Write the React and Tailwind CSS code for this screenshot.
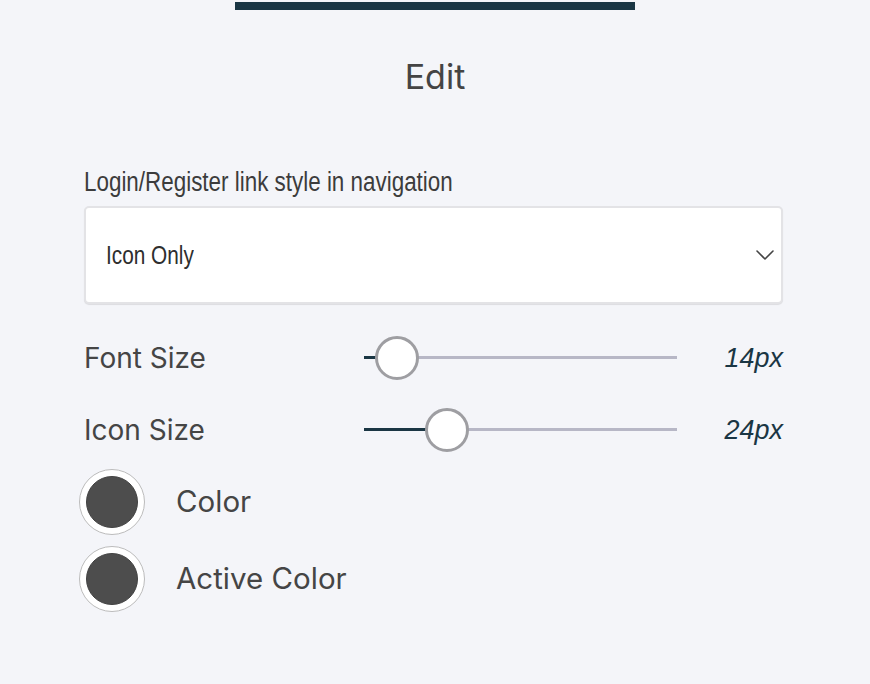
function SizeSlider({ label, value, thumb, fill }) {
  return (
    <div className="flex items-center h-[44px]">
      <span className="w-[280px] text-[28px] text-[#454545] font-['Inter',sans-serif] leading-none">{label}</span>
      <div className="relative w-[313px] h-[44px]">
        <div className="absolute left-0 right-0 top-[20px] h-[3px] bg-[#b7b7c6]" />
        <div className="absolute left-0 top-[20px] h-[3px] bg-[#1a3644]" style={{ width: fill }} />
        <div
          className="absolute top-0 w-[44px] h-[44px] rounded-full bg-white border-[3px] border-[#9e9ea2]"
          style={{ left: thumb - 22 }}
        />
      </div>
      <span className="flex-1 text-right text-[27px] italic text-[#1a3644] font-['Liberation_Sans',Arial,sans-serif] leading-none">
        {value}
      </span>
    </div>
  )
}

function ColorRow({ label }) {
  return (
    <div className="flex items-center gap-[31px] -ml-[5px]">
      <div className="w-[66px] h-[66px] rounded-full bg-white border-[1.5px] border-[#bcbcbc] flex items-center justify-center">
        <div className="w-[52px] h-[52px] rounded-full bg-[#4d4d4d] border border-[#424242]" />
      </div>
      <span className="text-[29.5px] text-[#454545] font-['Inter',sans-serif] leading-none">{label}</span>
    </div>
  )
}

export default function App() {
  return (
    <div className="min-h-screen bg-[#f4f5f9] pt-[2px]">
      <div className="mx-auto w-[400px] h-[8px] bg-[#1a3644]" />

      <h1 className="mt-[47px] text-center text-[34px] leading-[40px] text-[#444] font-['Inter',sans-serif]">Edit</h1>

      <div className="pl-[84px] pr-[87px] mt-[69px]">
        <p className="text-[27px] leading-[32px] text-[#3c3c3c] font-['Liberation_Sans',sans-serif]">
          <span className="inline-block origin-left scale-x-[0.83] whitespace-nowrap">Login/Register link style in navigation</span>
        </p>

        <div className="mt-[8px] h-[98px] bg-white border-2 border-[#e3e3e6] rounded-[5px] shadow-[0_1px_1px_rgba(0,0,0,0.1)] flex items-center pl-[20px] pr-[7px]">
          <span className="flex-1 text-[26px] text-[#2e2e2e] font-['Liberation_Sans',sans-serif]">
            <span className="inline-block origin-left scale-x-[0.8]">Icon Only</span>
          </span>
          <svg width="18" height="10" viewBox="0 0 18 10" fill="none">
            <path d="M1 1l8 8 8-8" stroke="#444" strokeWidth="1.6" strokeLinecap="round" strokeLinejoin="round" />
          </svg>
        </div>

        <div className="mt-[32px] flex flex-col gap-[28px]">
          <SizeSlider label="Font Size" value="14px" thumb={33} fill={12} />
          <SizeSlider label="Icon Size" value="24px" thumb={83} fill={62} />
        </div>

        <div className="mt-[17px] flex flex-col gap-[11px]">
          <ColorRow label="Color" />
          <ColorRow label="Active Color" />
        </div>
      </div>
    </div>
  )
}
